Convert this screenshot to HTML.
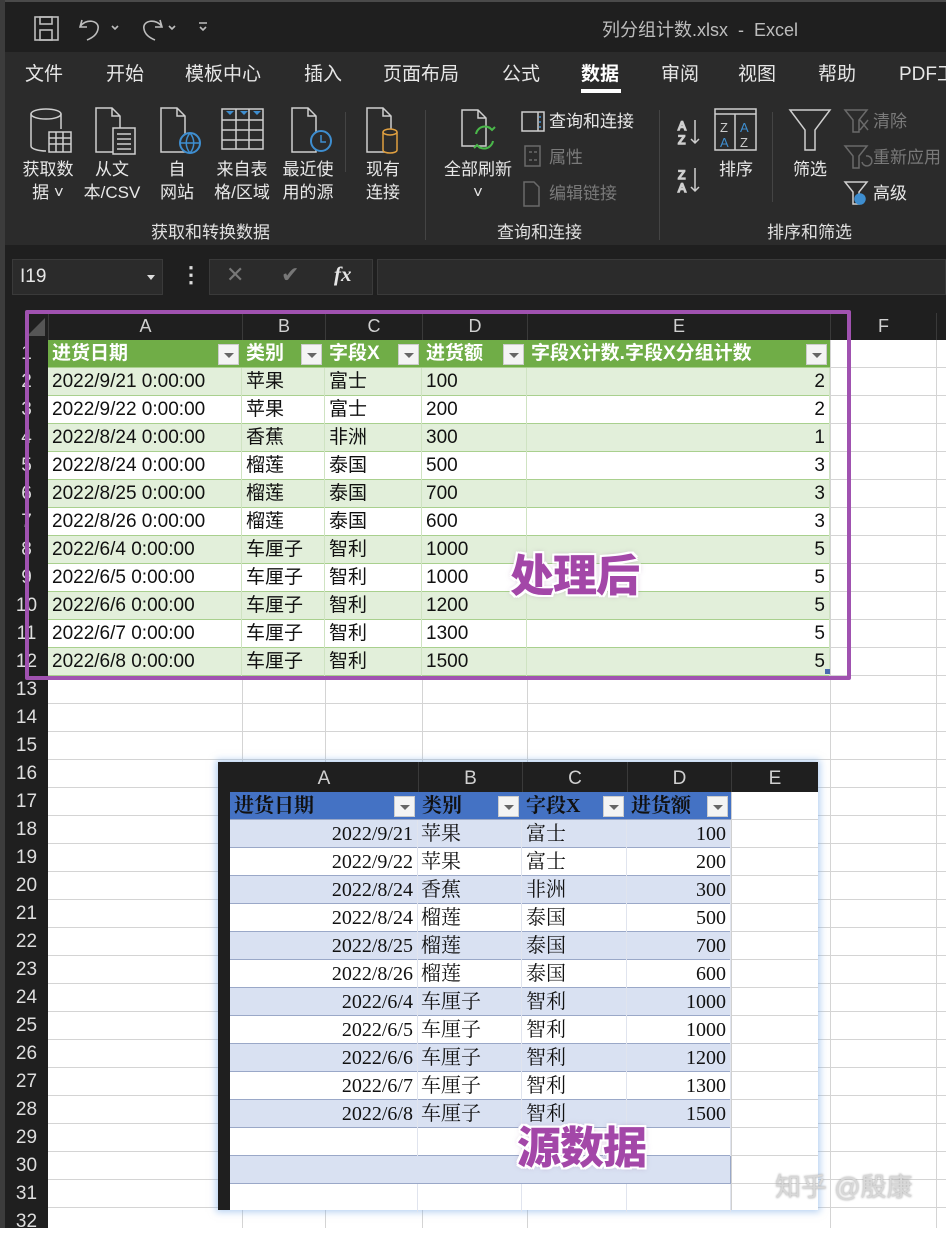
<!DOCTYPE html>
<html><head><meta charset="utf-8">
<style>
*{margin:0;padding:0;box-sizing:border-box}
body{width:946px;height:1228px;overflow:hidden;background:#fff;position:relative;font-family:"Liberation Sans","Noto Sans CJK SC",sans-serif}
.a{position:absolute}
.t{color:#e6e6e6;font-size:19px;position:absolute;top:62px;line-height:26px;white-space:nowrap}
.rl{position:absolute;color:#e8e8e8;font-size:17px;line-height:23px;text-align:center;white-space:nowrap}
.g{color:#7a7a7a}
.gl{position:absolute;top:218px;color:#e0e0e0;font-size:17px}
.sep{position:absolute;top:110px;width:1px;height:130px;background:#444}
.rn{position:absolute;left:5px;width:43px;height:28px;line-height:28px;text-align:center;color:#dedede;font-size:19px}
.vl{position:absolute;top:340px;bottom:0;width:1px;background:#d4d4d4}
.row{position:absolute;left:48px;width:782px;height:28px;display:flex;font-size:19px;line-height:28px;color:#111;border-bottom:1px solid #a9d08e}
.row div{height:28px;padding-left:4px;white-space:nowrap;overflow:hidden;border-right:1px solid #cfe3c2}
.gr{background:#e2efda}
.wh{background:#fff}
.c1{width:194px}.c2{width:83px}.c3{width:97px}.c4{width:105px}.c5{width:303px;text-align:right;padding-right:4px}
.hd{background:#70ad47;color:#fff;font-weight:bold}
.hd div{position:relative;border-right:none}
.fb{position:absolute;right:3px;top:4px;width:21px;height:21px;background:#f4f4f4;border:1px solid #ccc}
.fb:after{content:"";position:absolute;left:5px;top:8px;border-left:5px solid transparent;border-right:5px solid transparent;border-top:5px solid #666}
.lr{position:absolute;left:230px;width:501px;height:28px;display:flex;font-family:"Liberation Serif","Noto Serif CJK SC",serif;font-size:20px;line-height:28px;color:#111;border-bottom:1px solid #9aa8c8}
.lr div{height:28px;white-space:nowrap;overflow:hidden;border-right:1px solid #e0e4ee;position:relative}
.l1{width:188px;text-align:right;padding-right:4px}.l2{width:104px;padding-left:3px}.l3{width:105px;padding-left:4px}.l4{width:104px;text-align:right;padding-right:4px}
.bl{background:#d9e1f2}
.lh{background:#4472c4;font-weight:bold}
.lh div{text-align:left;padding-left:4px;border-right:none}
.big{position:absolute;font-size:44px;font-weight:900;color:#a347a8;font-family:"Noto Sans CJK SC",sans-serif;letter-spacing:-1px;text-shadow:2px 0 0 #fff,-2px 0 0 #fff,0 2px 0 #fff,0 -2px 0 #fff,2px 2px 0 #fff,-2px -2px 0 #fff,2px -2px 0 #fff,-2px 2px 0 #fff,0 0 6px rgba(120,60,130,.5)}
</style></head><body>
<div class="a" style="left:0;top:0;width:946px;height:52px;background:#1f1f1f;border-top:2px solid #4a4a4a"></div>
<div class="a" style="left:0;top:0;width:5px;height:1228px;background:#3c3c3c;z-index:5"></div>
<svg class="a" style="left:30px;top:14px" width="190" height="30" viewBox="0 0 190 30" fill="none" stroke="#bdbdbd" stroke-width="1.6">
<rect x="5" y="3" width="23" height="23"/><rect x="10" y="3" width="12" height="7"/><rect x="10" y="16" width="12" height="10"/>
<path d="M52 6 L50 13 L57 13 M50 13 C55 4 70 6 68 15 C67 21 62 24 57 26"/><path d="M82 12 l3 3 l3 -3"/>
<path d="M130 6 L132 13 L125 13 M132 13 C127 4 112 6 114 15 C115 21 120 24 125 26"/><path d="M139 12 l3 3 l3 -3"/>
<path d="M169 9 h8 M170 13 l3 3 l3 -3"/>
</svg>
<div class="a" style="left:602px;top:16px;color:#bdbdbd;font-size:18px">列分组计数.xlsx&nbsp;&nbsp;-&nbsp;&nbsp;Excel</div>
<div class="a" style="left:0;top:52px;width:946px;height:193px;background:#2b2b2b"></div>
<div class="t" style="left:25px">文件</div><div class="t" style="left:106px">开始</div><div class="t" style="left:185px">模板中心</div><div class="t" style="left:304px">插入</div><div class="t" style="left:383px">页面布局</div><div class="t" style="left:502px">公式</div><div class="t" style="left:581px;font-weight:bold;color:#fff">数据</div><div class="t" style="left:661px">审阅</div><div class="t" style="left:738px">视图</div><div class="t" style="left:818px">帮助</div><div class="t" style="left:899px">PDF工</div>
<div class="a" style="left:581px;top:89px;width:40px;height:4px;background:#fff"></div>
<svg class="a" style="left:0;top:100px" width="946" height="110" viewBox="0 0 946 110" fill="none" stroke="#cfcfcf" stroke-width="1.5">
<ellipse cx="46" cy="14" rx="15" ry="5"/><path d="M31 14 v32 c0 3 8 5 15 5 M61 14 v15"/><rect x="49" y="32" width="22" height="20" fill="#2b2b2b"/><path d="M49 38h22M49 44h22M56 32v20M63 32v20"/>
<path d="M96 8h16l8 8v36h-24z M112 8v8h8"/><rect x="113" y="28" width="22" height="26" fill="#2b2b2b"/><path d="M117 34h14M117 39h14M117 44h14M117 49h14"/>
<path d="M161 8h16l8 8v36h-24z M177 8v8h8"/><circle cx="190" cy="43" r="10" stroke="#3e8ed0" stroke-width="2" fill="#2b2b2b"/><path d="M180 43h20M190 33c-5 6-5 14 0 20c5-6 5-14 0-20" stroke="#3e8ed0"/>
<rect x="222" y="9" width="41" height="40"/><path d="M222 20h41M222 30h41M222 40h41M236 9v40M249 9v40"/><path d="M226 11l4 4 4-4zM240 11l4 4 4-4zM253 11l4 4 4-4z" fill="#3e8ed0" stroke="none"/>
<path d="M292 8h16l8 8v36h-24z M308 8v8h8"/><circle cx="321" cy="41" r="10" stroke="#3e8ed0" stroke-width="2" fill="#2b2b2b"/><path d="M321 35v7h5" stroke="#3e8ed0"/>
<path d="M367 8h16l8 8v36h-24z M383 8v8h8"/><path d="M383 32v18c0 4 14 4 14 0v-18" stroke="#e0a040" fill="#2b2b2b"/><ellipse cx="390" cy="32" rx="7" ry="3" stroke="#e0a040" fill="#2b2b2b"/>
<path d="M462 10h16l8 8v28h-24z M478 10v8h8"/><path d="M476 34a9 9 0 0 1 16-4M493 41a9 9 0 0 1-16 4M489 27l3 3 3-3M480 48l-3-3-3 3" stroke="#4ab84a" stroke-width="2"/>
<rect x="522" y="12" width="22" height="19"/><path d="M538 12v19" /><path d="M540 16v2M540 21v2M540 26v2" stroke="#3e8ed0"/>
<g stroke="#6a6a6a"><rect x="525" y="46" width="15" height="20"/><path d="M529 52h3M529 60h3M534 52h3M534 60h3"/><path d="M524 82h10l5 5v19h-15z"/></g>
<g font-size="12"><text x="678" y="30" fill="#3e8ed0" font-family="Liberation Sans">A</text><text x="678" y="44" fill="#ccc" font-family="Liberation Sans">Z</text><text x="678" y="79" fill="#ccc" font-family="Liberation Sans">Z</text><text x="678" y="92" fill="#3e8ed0" font-family="Liberation Sans">A</text></g>
<path d="M695 20v23M691 39l4 4 4-4M695 68v23M691 87l4 4 4-4"/>
<rect x="715" y="9" width="41" height="41"/><path d="M715 14h41M735 14v36"/>
<text x="720" y="32" fill="#ccc" stroke="none" font-size="13">Z</text><text x="740" y="32" fill="#3e8ed0" stroke="none" font-size="13">A</text><text x="720" y="47" fill="#3e8ed0" stroke="none" font-size="13">A</text><text x="740" y="47" fill="#ccc" stroke="none" font-size="13">Z</text>
<path d="M790 10h40l-15 20v20h-10v-20z"/>
<g stroke="#6a6a6a"><path d="M845 10h22l-8 10v12h-6v-12z M860 20l8 10M868 20l-8 10"/><path d="M845 46h22l-8 10v12h-6v-12z M862 62a5 5 0 1 0 4-6"/></g>
<path d="M845 82h22l-8 10v12h-6v-12z"/><circle cx="860" cy="99" r="5" fill="#3e8ed0" stroke="#3e8ed0"/>
</svg>
<div class="rl" style="left:18px;top:158px;width:60px">获取数<br>据 ˅</div>
<div class="rl" style="left:80px;top:158px;width:64px">从文<br>本/CSV</div>
<div class="rl" style="left:155px;top:158px;width:44px">自<br>网站</div>
<div class="rl" style="left:209px;top:158px;width:66px">来自表<br>格/区域</div>
<div class="rl" style="left:279px;top:158px;width:58px">最近使<br>用的源</div>
<div class="rl" style="left:358px;top:158px;width:50px">现有<br>连接</div>
<div class="rl" style="left:440px;top:158px;width:76px">全部刷新<br>˅</div>
<div class="rl" style="left:549px;top:110px">查询和连接</div>
<div class="rl g" style="left:549px;top:146px">属性</div>
<div class="rl g" style="left:549px;top:182px">编辑链接</div>
<div class="rl" style="left:715px;top:158px;width:42px">排序</div>
<div class="rl" style="left:790px;top:158px;width:40px">筛选</div>
<div class="rl g" style="left:873px;top:110px">清除</div>
<div class="rl g" style="left:873px;top:146px">重新应用</div>
<div class="rl" style="left:873px;top:182px">高级</div>
<div class="sep" style="left:345px;top:112px;height:60px"></div>
<div class="sep" style="left:425px"></div><div class="sep" style="left:659px"></div><div class="sep" style="left:772px;top:112px;height:90px"></div>
<div class="gl" style="left:151px">获取和转换数据</div><div class="gl" style="left:497px">查询和连接</div><div class="gl" style="left:767px">排序和筛选</div>
<div class="a" style="left:0;top:245px;width:946px;height:95px;background:#1f1f1f"></div>
<div class="a" style="left:12px;top:259px;width:151px;height:36px;background:#2b2b2b;border:1px solid #3a3a3a;color:#e6e6e6;font-size:19px;line-height:34px;padding-left:7px">I19<span style="position:absolute;left:134px;top:15px;border-left:4px solid transparent;border-right:4px solid transparent;border-top:5px solid #ddd"></span></div>
<div class="a" style="left:180px;top:262px;color:#ddd;font-size:22px;font-weight:bold">⋮</div>
<div class="a" style="left:209px;top:259px;width:164px;height:36px;background:#2b2b2b;border:1px solid #3a3a3a"></div>
<div class="a" style="left:226px;top:262px;color:#777;font-size:22px">✕</div>
<div class="a" style="left:281px;top:262px;color:#777;font-size:22px">✔</div>
<div class="a" style="left:334px;top:262px;color:#e6e6e6;font-size:21px;font-style:italic;font-family:'Liberation Serif',serif;font-weight:bold">fx</div>
<div class="a" style="left:377px;top:259px;width:569px;height:36px;background:#2b2b2b;border:1px solid #3a3a3a"></div>
<div class="a" style="left:5px;top:313px;width:941px;height:27px;background:#1f1f1f;color:#d0d0d0;font-size:18px;line-height:27px">
<span class="a" style="left:43px;width:194px;text-align:center;border-left:1px solid #3a3a3a">A</span>
<span class="a" style="left:237px;width:83px;text-align:center;border-left:1px solid #3a3a3a">B</span>
<span class="a" style="left:320px;width:97px;text-align:center;border-left:1px solid #3a3a3a">C</span>
<span class="a" style="left:417px;width:105px;text-align:center;border-left:1px solid #3a3a3a">D</span>
<span class="a" style="left:522px;width:303px;text-align:center;border-left:1px solid #3a3a3a">E</span>
<span class="a" style="left:825px;width:106px;text-align:center;border-left:1px solid #3a3a3a">F</span>
<span class="a" style="left:931px;width:10px;border-left:1px solid #3a3a3a">&nbsp;</span>
</div>
<div class="a" style="left:27px;top:318px;border-left:18px solid transparent;border-bottom:18px solid #555"></div>
<div class="a" style="left:5px;top:340px;width:43px;height:888px;background:#1f1f1f"></div>
<div class="a" style="left:48px;top:340px;right:0;bottom:0;background:repeating-linear-gradient(to bottom,transparent 0,transparent 27px,#d4d4d4 27px,#d4d4d4 28px)"></div>
<div class="vl" style="left:242px"></div><div class="vl" style="left:325px"></div><div class="vl" style="left:422px"></div><div class="vl" style="left:527px"></div><div class="vl" style="left:830px"></div><div class="vl" style="left:936px"></div>
<div class="rn" style="top:340px">1</div><div class="rn" style="top:368px">2</div><div class="rn" style="top:396px">3</div><div class="rn" style="top:424px">4</div><div class="rn" style="top:452px">5</div><div class="rn" style="top:480px">6</div><div class="rn" style="top:508px">7</div><div class="rn" style="top:536px">8</div><div class="rn" style="top:564px">9</div><div class="rn" style="top:592px">10</div><div class="rn" style="top:620px">11</div><div class="rn" style="top:648px">12</div><div class="rn" style="top:676px">13</div><div class="rn" style="top:704px">14</div><div class="rn" style="top:732px">15</div><div class="rn" style="top:760px">16</div><div class="rn" style="top:788px">17</div><div class="rn" style="top:816px">18</div><div class="rn" style="top:844px">19</div><div class="rn" style="top:872px">20</div><div class="rn" style="top:900px">21</div><div class="rn" style="top:928px">22</div><div class="rn" style="top:956px">23</div><div class="rn" style="top:984px">24</div><div class="rn" style="top:1012px">25</div><div class="rn" style="top:1040px">26</div><div class="rn" style="top:1068px">27</div><div class="rn" style="top:1096px">28</div><div class="rn" style="top:1124px">29</div><div class="rn" style="top:1152px">30</div><div class="rn" style="top:1180px">31</div><div class="rn" style="top:1208px">32</div>
<div class="row hd" style="top:340px"><div class="c1">进货日期<span class="fb"></span></div><div class="c2">类别<span class="fb"></span></div><div class="c3">字段X<span class="fb"></span></div><div class="c4">进货额<span class="fb"></span></div><div class="c5" style="text-align:left;padding-left:4px">字段X计数.字段X分组计数<span class="fb"></span></div></div>
<div class="row gr" style="top:368px"><div class="c1">2022/9/21 0:00:00</div><div class="c2">苹果</div><div class="c3">富士</div><div class="c4">100</div><div class="c5">2</div></div>
<div class="row wh" style="top:396px"><div class="c1">2022/9/22 0:00:00</div><div class="c2">苹果</div><div class="c3">富士</div><div class="c4">200</div><div class="c5">2</div></div>
<div class="row gr" style="top:424px"><div class="c1">2022/8/24 0:00:00</div><div class="c2">香蕉</div><div class="c3">非洲</div><div class="c4">300</div><div class="c5">1</div></div>
<div class="row wh" style="top:452px"><div class="c1">2022/8/24 0:00:00</div><div class="c2">榴莲</div><div class="c3">泰国</div><div class="c4">500</div><div class="c5">3</div></div>
<div class="row gr" style="top:480px"><div class="c1">2022/8/25 0:00:00</div><div class="c2">榴莲</div><div class="c3">泰国</div><div class="c4">700</div><div class="c5">3</div></div>
<div class="row wh" style="top:508px"><div class="c1">2022/8/26 0:00:00</div><div class="c2">榴莲</div><div class="c3">泰国</div><div class="c4">600</div><div class="c5">3</div></div>
<div class="row gr" style="top:536px"><div class="c1">2022/6/4 0:00:00</div><div class="c2">车厘子</div><div class="c3">智利</div><div class="c4">1000</div><div class="c5">5</div></div>
<div class="row wh" style="top:564px"><div class="c1">2022/6/5 0:00:00</div><div class="c2">车厘子</div><div class="c3">智利</div><div class="c4">1000</div><div class="c5">5</div></div>
<div class="row gr" style="top:592px"><div class="c1">2022/6/6 0:00:00</div><div class="c2">车厘子</div><div class="c3">智利</div><div class="c4">1200</div><div class="c5">5</div></div>
<div class="row wh" style="top:620px"><div class="c1">2022/6/7 0:00:00</div><div class="c2">车厘子</div><div class="c3">智利</div><div class="c4">1300</div><div class="c5">5</div></div>
<div class="row gr" style="top:648px"><div class="c1">2022/6/8 0:00:00</div><div class="c2">车厘子</div><div class="c3">智利</div><div class="c4">1500</div><div class="c5">5</div></div>
<div class="a" style="left:825px;top:669px;width:5px;height:5px;background:#4a6bb0"></div>
<div class="a" style="left:25px;top:310px;width:826px;height:370px;border:4px solid #a052b0;border-radius:2px"></div>
<div class="big" style="left:510px;top:540px">处理后</div>
<div class="a" style="left:218px;top:762px;width:600px;height:448px;background:#fff;box-shadow:0 0 7px 2px rgba(120,170,230,.55)"></div>
<div class="a" style="left:218px;top:762px;width:12px;height:448px;background:#1f1f1f"></div>
<div class="a" style="left:218px;top:762px;width:600px;height:30px;background:#1f1f1f;color:#d0d0d0;font-size:19px;line-height:34px">
<span class="a" style="left:12px;width:188px;text-align:center">A</span><span class="a" style="left:200px;width:104px;text-align:center;border-left:1px solid #3a3a3a">B</span><span class="a" style="left:304px;width:105px;text-align:center;border-left:1px solid #3a3a3a">C</span><span class="a" style="left:409px;width:104px;text-align:center;border-left:1px solid #3a3a3a">D</span><span class="a" style="left:513px;width:87px;text-align:center;border-left:1px solid #3a3a3a">E</span></div>
<div class="a" style="left:230px;top:792px;width:588px;height:418px;background:repeating-linear-gradient(to bottom,transparent 0,transparent 27px,#d4d4d4 27px,#d4d4d4 28px)"></div>
<div class="a" style="left:731px;top:792px;width:1px;height:418px;background:#d0d0d0"></div>
<div class="lr lh" style="top:792px"><div class="l1">进货日期<span class="fb"></span></div><div class="l2">类别<span class="fb"></span></div><div class="l3">字段X<span class="fb"></span></div><div class="l4">进货额<span class="fb"></span></div></div>
<div class="lr bl" style="top:820px"><div class="l1">2022/9/21</div><div class="l2">苹果</div><div class="l3">富士</div><div class="l4">100</div></div>
<div class="lr wh" style="top:848px"><div class="l1">2022/9/22</div><div class="l2">苹果</div><div class="l3">富士</div><div class="l4">200</div></div>
<div class="lr bl" style="top:876px"><div class="l1">2022/8/24</div><div class="l2">香蕉</div><div class="l3">非洲</div><div class="l4">300</div></div>
<div class="lr wh" style="top:904px"><div class="l1">2022/8/24</div><div class="l2">榴莲</div><div class="l3">泰国</div><div class="l4">500</div></div>
<div class="lr bl" style="top:932px"><div class="l1">2022/8/25</div><div class="l2">榴莲</div><div class="l3">泰国</div><div class="l4">700</div></div>
<div class="lr wh" style="top:960px"><div class="l1">2022/8/26</div><div class="l2">榴莲</div><div class="l3">泰国</div><div class="l4">600</div></div>
<div class="lr bl" style="top:988px"><div class="l1">2022/6/4</div><div class="l2">车厘子</div><div class="l3">智利</div><div class="l4">1000</div></div>
<div class="lr wh" style="top:1016px"><div class="l1">2022/6/5</div><div class="l2">车厘子</div><div class="l3">智利</div><div class="l4">1000</div></div>
<div class="lr bl" style="top:1044px"><div class="l1">2022/6/6</div><div class="l2">车厘子</div><div class="l3">智利</div><div class="l4">1200</div></div>
<div class="lr wh" style="top:1072px"><div class="l1">2022/6/7</div><div class="l2">车厘子</div><div class="l3">智利</div><div class="l4">1300</div></div>
<div class="lr bl" style="top:1100px"><div class="l1">2022/6/8</div><div class="l2">车厘子</div><div class="l3">智利</div><div class="l4">1500</div></div>
<div class="lr wh" style="top:1128px"><div class="l1"></div><div class="l2"></div><div class="l3"></div><div class="l4"></div></div>
<div class="lr bl" style="top:1156px;border-right:1px solid #9aa8c8"></div>
<div class="lr wh" style="top:1184px;height:26px;border-bottom:none"><div class="l1"></div><div class="l2"></div><div class="l3"></div><div class="l4"></div></div>
<div class="big" style="left:517px;top:1112px">源数据</div>
<div class="a" style="left:775px;top:1167px;color:#d8d8d8;font-size:26px;text-shadow:0 0 2px #999">知乎 @殷康</div>
</body></html>
